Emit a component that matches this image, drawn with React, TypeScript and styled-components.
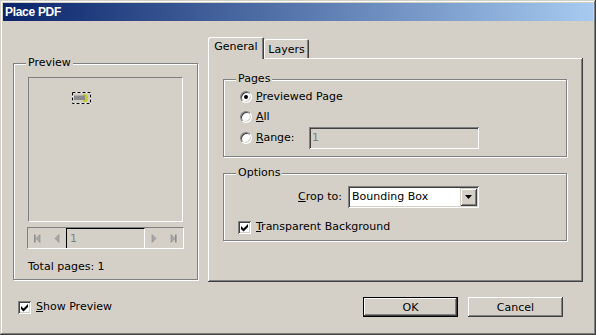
import styled, { createGlobalStyle, css } from 'styled-components';

const GlobalStyle = createGlobalStyle`
  html, body {
    margin: 0;
    padding: 0;
    background: #d4d0c8;
  }
  * {
    box-sizing: border-box;
  }
`;

const raised = css`
  box-shadow: inset -1px -1px 0 #404040, inset 1px 1px 0 #ffffff, inset -2px -2px 0 #808080;
`;

const sunken = css`
  box-shadow: inset 1px 1px 0 #808080, inset -1px -1px 0 #ffffff, inset 2px 2px 0 #404040,
    inset -2px -2px 0 #d4d0c8;
`;

const Window = styled.div`
  width: 596px;
  height: 335px;
  padding: 3px;
  display: flex;
  flex-direction: column;
  background: #d4d0c8;
  font-family: 'DejaVu Sans', sans-serif;
  font-size: 11px;
  color: #000;
  box-shadow: inset -1px -1px 0 #404040, inset 1px 1px 0 #d4d0c8, inset -2px -2px 0 #808080,
    inset 2px 2px 0 #ffffff;
`;

const TitleBar = styled.div`
  height: 18px;
  padding-left: 2px;
  display: flex;
  align-items: center;
  background: linear-gradient(to right, #0a246a, #a6caf0);
  color: #fff;
  font-family: 'Liberation Sans', Arial, sans-serif;
  font-weight: 700;
  font-size: 12px;
  letter-spacing: -0.3px;
`;

const Body = styled.div`
  flex: 1;
  padding: 16px 10px 0 10px;
  display: flex;
  flex-direction: column;
`;

const MainRow = styled.div`
  display: flex;
  align-items: flex-start;
  gap: 10px;
`;

const LeftColumn = styled.div`
  width: 185px;
  padding-top: 26px;
`;

const RightColumn = styled.div`
  width: 375px;
`;

const Group = styled.div<{ $height: number; $pad: string }>`
  position: relative;
  height: ${(p) => p.$height}px;
  padding: ${(p) => p.$pad};
  border: 1px solid #808080;
  box-shadow: inset 1px 1px 0 #fff, 1px 1px 0 #fff;
`;

const Spacer = styled.div<{ $size: number }>`
  height: ${(p) => p.$size}px;
`;

const Legend = styled.span`
  position: absolute;
  top: -8px;
  left: 12px;
  padding: 0 2px;
  line-height: 13px;
  background: #d4d0c8;
`;

const PreviewArea = styled.div`
  position: relative;
  margin: 0 1px;
  height: 145px;
  border: 1px solid;
  border-color: #808080 #fff #fff #808080;
`;

const Thumb = styled.svg`
  position: absolute;
  left: 43px;
  top: 14px;
`;

const NavBar = styled.div`
  margin-top: 5px;
  height: 22px;
  display: flex;
  border: 1px solid;
  border-color: #808080 #fff #fff #808080;
`;

const NavButton = styled.div`
  width: 19px;
  display: flex;
  align-items: center;
  justify-content: center;
`;

const NavInput = styled.div`
  width: 79px;
  padding: 1px 0 0 3px;
  line-height: 18px;
  color: #808080;
  border-top: 1px solid #000;
  border-left: 1px solid #000;
  border-right: 1px solid #fff;
`;

const TotalPages = styled.div`
  margin: 11px 0 0 1px;
  line-height: 14px;
`;

const TabStrip = styled.div`
  height: 21px;
  display: flex;
  align-items: flex-end;
`;

const Tab = styled.div<{ $active?: boolean; $width: number }>`
  position: relative;
  width: ${(p) => p.$width}px;
  height: ${(p) => (p.$active ? 22 : 19)}px;
  margin-bottom: ${(p) => (p.$active ? -1 : 0)}px;
  padding-top: ${(p) => (p.$active ? 3 : 4)}px;
  z-index: ${(p) => (p.$active ? 1 : 0)};
  text-align: center;
  line-height: 14px;
  background: #d4d0c8;
  border-radius: 2px 2px 0 0;
  box-shadow: inset 1px 1px 0 #fff, inset -1px 0 0 #404040, inset -2px 0 0 #808080;
`;

const Panel = styled.div`
  height: 224px;
  padding: 21px 16px 0 15px;
  ${raised}
`;

const Row = styled.div<{ $height: number }>`
  height: ${(p) => p.$height}px;
  display: flex;
  align-items: center;
  gap: 4px;
`;

const Radio = styled.span`
  position: relative;
  width: 12px;
  height: 12px;
  border-radius: 50%;
  border: 1px solid;
  border-color: #808080 #fff #fff #808080;
  background: #fff;
  box-shadow: inset 1px 1px 0 #404040, inset -1px -1px 0 #d4d0c8;
  display: flex;
  align-items: center;
  justify-content: center;
`;

const RadioDot = styled.span`
  width: 4px;
  height: 4px;
  border-radius: 50%;
  background: #000;
`;

const Label = styled.span<{ $width?: number; $right?: boolean }>`
  line-height: 14px;
  white-space: nowrap;
  ${(p) => p.$width && `width: ${p.$width}px;`}
  ${(p) => p.$right && 'text-align: right;'}
`;

const TextField = styled.div<{ $width: number }>`
  width: ${(p) => p.$width}px;
  height: 22px;
  padding: 4px 0 0 3px;
  line-height: 14px;
  color: #808080;
  ${sunken}
`;

const CropRow = styled.div`
  height: 22px;
  display: flex;
  align-items: center;
  gap: 6px;
`;

const Select = styled.div`
  width: 131px;
  height: 22px;
  padding: 2px;
  display: flex;
  background: #fff;
  ${sunken}
`;

const SelectValue = styled.span`
  flex: 1;
  padding: 2px 0 0 2px;
  line-height: 14px;
`;

const DropButton = styled.span`
  width: 17px;
  height: 18px;
  display: flex;
  align-items: center;
  justify-content: center;
  background: #d4d0c8;
  box-shadow: inset 1px 1px 0 #d4d0c8, inset -1px -1px 0 #404040, inset 2px 2px 0 #fff,
    inset -2px -2px 0 #808080;
`;

const CheckRow = styled.label<{ $top?: number }>`
  margin-top: ${(p) => p.$top ?? 0}px;
  display: flex;
  align-items: center;
  gap: 5px;
`;

const CheckBox = styled.span`
  width: 13px;
  height: 13px;
  display: flex;
  background: #fff;
  ${sunken}
`;

const Footer = styled.div`
  margin-top: 15px;
  height: 20px;
  padding: 0 20px 0 5px;
  display: flex;
  align-items: center;
  justify-content: space-between;
`;

const Buttons = styled.div`
  display: flex;
  gap: 10px;
`;

const Button = styled.button<{ $default?: boolean }>`
  width: 95px;
  height: 20px;
  padding: 0;
  font: inherit;
  color: #000;
  background: #d4d0c8;
  ${(p) => (p.$default ? 'border: 1px solid #000;' : 'border: none;')}
  ${raised}
`;

function Check() {
  return (
    <svg width="13" height="13" viewBox="0 0 13 13">
      <polygon points="3,5 5.5,7.5 10,3 10,6 5.5,10.5 3,8" fill="#000" />
    </svg>
  );
}

function CheckField({ children, top }: { children: React.ReactNode; top?: number }) {
  return (
    <CheckRow $top={top}>
      <CheckBox>
        <Check />
      </CheckBox>
      <Label>{children}</Label>
    </CheckRow>
  );
}

function NavIcon({ dir, bar }: { dir: 'left' | 'right'; bar?: boolean }) {
  const tri = dir === 'left' ? 'M6 0.5 L2 4.5 L6 8.5 Z' : 'M1 0.5 L5 4.5 L1 8.5 Z';
  const barX = dir === 'left' ? 0 : 5;
  return (
    <svg width="7" height="9" viewBox="0 0 7 9">
      {bar && <rect x={barX} y="0.5" width="1.6" height="8" fill="#8c8c8c" />}
      <path d={tri} fill="#a8a8a8" stroke="#8c8c8c" strokeWidth="0.6" />
    </svg>
  );
}

export default function App() {
  return (
    <>
      <GlobalStyle />
      <Window>
        <TitleBar>Place PDF</TitleBar>
        <Body>
          <MainRow>
            <LeftColumn>
              <Group $height={217} $pad="13px 13px 0 13px">
                <Legend>Preview</Legend>
                <PreviewArea>
                  <Thumb width="19" height="12" viewBox="0 0 19 12">
                    <ellipse cx="13" cy="6" rx="3" ry="4" fill="#c4cc2a" />
                    <rect x="2" y="3.5" width="11" height="4.5" fill="#8a8a8a" />
                    <rect x="0.5" y="0.5" width="18" height="11" fill="none" stroke="#fff" />
                    <rect
                      x="0.5"
                      y="0.5"
                      width="18"
                      height="11"
                      fill="none"
                      stroke="#000"
                      strokeDasharray="3 2"
                    />
                  </Thumb>
                </PreviewArea>
                <NavBar>
                  <NavButton>
                    <NavIcon dir="left" bar />
                  </NavButton>
                  <NavButton>
                    <NavIcon dir="left" />
                  </NavButton>
                  <NavInput>1</NavInput>
                  <NavButton>
                    <NavIcon dir="right" />
                  </NavButton>
                  <NavButton>
                    <NavIcon dir="right" bar />
                  </NavButton>
                </NavBar>
                <TotalPages>Total pages: 1</TotalPages>
              </Group>
            </LeftColumn>

            <RightColumn>
              <TabStrip>
                <Tab $active $width={56}>
                  General
                </Tab>
                <Tab $width={45}>Layers</Tab>
              </TabStrip>
              <Panel>
                <Group $height={78} $pad="7px 0 0 16px">
                  <Legend>Pages</Legend>
                  <Row $height={20}>
                    <Radio>
                      <RadioDot />
                    </Radio>
                    <Label>
                      <u>P</u>reviewed Page
                    </Label>
                  </Row>
                  <Row $height={20}>
                    <Radio />
                    <Label>
                      <u>A</u>ll
                    </Label>
                  </Row>
                  <Row $height={22}>
                    <Radio />
                    <Label $width={49}>
                      <u>R</u>ange:
                    </Label>
                    <TextField $width={170}>1</TextField>
                  </Row>
                </Group>

                <Spacer $size={16} />

                <Group $height={68} $pad="12px 0 0 14px">
                  <Legend>Options</Legend>
                  <CropRow>
                    <Label $width={104} $right>
                      <u>C</u>rop to:
                    </Label>
                    <Select>
                      <SelectValue>Bounding Box</SelectValue>
                      <DropButton>
                        <svg width="7" height="4" viewBox="0 0 7 4">
                          <path d="M0 0 H7 L3.5 4 Z" fill="#000" />
                        </svg>
                      </DropButton>
                    </Select>
                  </CropRow>
                  <CheckField top={12}>
                    <u>T</u>ransparent Background
                  </CheckField>
                </Group>
              </Panel>
            </RightColumn>
          </MainRow>

          <Footer>
            <CheckField>
              <u>S</u>how Preview
            </CheckField>
            <Buttons>
              <Button $default>OK</Button>
              <Button>Cancel</Button>
            </Buttons>
          </Footer>
        </Body>
      </Window>
    </>
  );
}
